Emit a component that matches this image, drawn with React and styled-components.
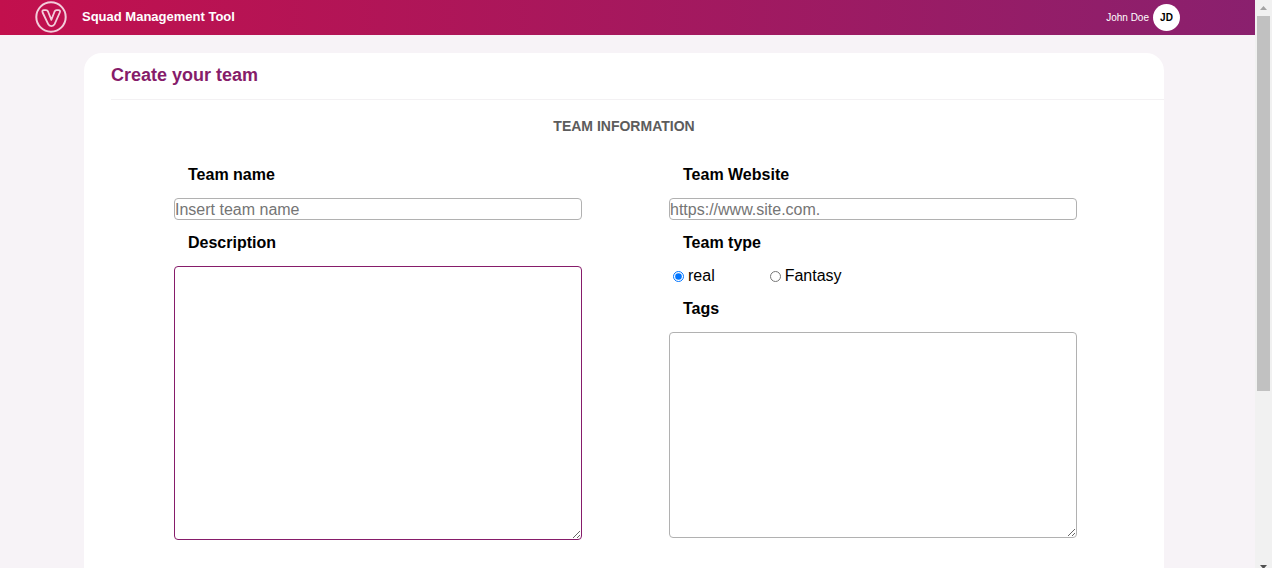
import React from "react";
import styled, { createGlobalStyle } from "styled-components";

const GlobalStyle = createGlobalStyle`
  *, *::before, *::after { box-sizing: border-box; }
  body {
    margin: 0;
    background: #f7f3f7;
    color: #000;
    font-family: "Liberation Sans", Arial, sans-serif;
    font-size: 16px;
    line-height: 20px;
  }
`;

const Shell = styled.div`
  display: flex;
  height: 100vh;
  overflow: hidden;
`;

const Page = styled.div`
  flex: 1;
  min-width: 0;
  display: flex;
  flex-direction: column;
`;

const Header = styled.header`
  flex: none;
  display: flex;
  align-items: center;
  justify-content: space-between;
  height: 35px;
  padding: 0 75px 0 35px;
  background: linear-gradient(to right, #c2104d, #8a206e);
  color: #fff;
`;

const Brand = styled.div`
  display: flex;
  align-items: center;
  gap: 15px;
  padding-bottom: 2px;
  font-size: 13px;
  font-weight: 700;
`;

const Logo = styled.svg`
  display: block;
  width: 32px;
  height: 32px;
`;

const User = styled.div`
  display: flex;
  align-items: center;
  gap: 4px;
  font-size: 10px;
`;

const Avatar = styled.span`
  display: grid;
  place-items: center;
  width: 27px;
  height: 27px;
  border-radius: 50%;
  background: #fff;
  color: #000;
  font-weight: 700;
`;

const Content = styled.main`
  flex: 1;
  display: flex;
  padding: 18px 91px 0 84px;
`;

const Card = styled.section`
  flex: 1;
  min-width: 0;
  border-radius: 18px 18px 0 0;
  background: #fff;
`;

const CardTitle = styled.h1`
  margin: 0 0 0 27px;
  padding: 12px 0 14px;
  border-bottom: 1px solid #f3f1f3;
  color: #861c6a;
  font-size: 18px;
`;

const SectionTitle = styled.h2`
  margin: 16px 0 29px;
  color: #5c5c5c;
  font-size: 14px;
  text-align: center;
`;

const Form = styled.form`
  display: grid;
  grid-template-columns: 1fr 1fr;
  align-items: start;
  gap: 87px;
  padding: 0 87px 0 90px;
`;

const Column = styled.div`
  display: flex;
  flex-direction: column;
  gap: 13px;
`;

const Field = styled.div`
  display: flex;
  flex-direction: column;
  gap: 13px;
`;

const Label = styled.label`
  padding-left: 14px;
  font-weight: 700;
`;

const TextInput = styled.input`
  width: 100%;
  height: 22px;
  padding: 1px 0 0;
  border: 1px solid #b1b1b1;
  border-radius: 4px;
  background: #fff;
  font: inherit;
  outline: none;
  &::placeholder { color: #757575; }
  &:focus { border-color: #861c6a; }
`;

const TextArea = styled.textarea`
  display: block;
  width: 100%;
  height: ${(p) => p.$height}px;
  padding: 2px;
  border: 1px solid ${(p) => (p.$active ? "#861c6a" : "#b1b1b1")};
  border-radius: 4px;
  background: #fff;
  font: inherit;
  outline: none;
  resize: both;
  &:focus { border-color: #861c6a; }
`;

const RadioField = styled.fieldset`
  margin: 0;
  padding: 0;
  border: 0;
  min-width: 0;
`;

const Legend = styled.legend`
  margin-bottom: 13px;
  padding: 0 0 0 14px;
  font-weight: 700;
`;

const RadioRow = styled.div`
  display: flex;
  gap: 55px;
  padding-left: 4px;
`;

const RadioLabel = styled.label`
  display: flex;
  align-items: center;
  gap: 4px;
`;

const Radio = styled.input`
  width: 11px;
  height: 11px;
  margin: 0;
`;

const ScrollTrack = styled.div`
  flex: none;
  display: flex;
  flex-direction: column;
  align-items: center;
  width: 17px;
  background: #f1f1f1;
`;

const ScrollThumb = styled.div`
  width: 13px;
  height: 66%;
  background: #c1c1c1;
`;

const ScrollArrow = styled.svg`
  flex: none;
  display: block;
  width: 17px;
  height: 16px;
  fill: ${(p) => (p.$end ? "#505050" : "#a3a3a3")};
  margin-top: ${(p) => (p.$end ? "auto" : 0)};
`;

export default function App() {
  return (
    <>
      <GlobalStyle />
      <Shell>
        <Page>
          <Header>
            <Brand>
              <Logo viewBox="0 0 32 32" fill="none" stroke="#f3cddb" aria-hidden="true">
                <circle cx="16" cy="16" r="14.7" strokeWidth="2" />
                <path
                  d="M9 9.2H11Q12.4 9.2 13 10.5L16.4 18.8L19.6 10.5Q20.2 9.2 21.6 9.2H23.4Q25.7 9.2 24.8 11.5L19.6 23.2Q18.7 25.1 16.4 25.1Q14.1 25.1 13.2 23.2L7.6 11.5Q6.7 9.2 9 9.2Z"
                  strokeWidth="1.8"
                  strokeLinejoin="round"
                />
              </Logo>
              <span>Squad Management Tool</span>
            </Brand>
            <User>
              <span>John Doe</span>
              <Avatar>JD</Avatar>
            </User>
          </Header>
          <Content>
            <Card>
              <CardTitle>Create your team</CardTitle>
              <SectionTitle>TEAM INFORMATION</SectionTitle>
              <Form>
                <Column>
                  <Field>
                    <Label htmlFor="name">Team name</Label>
                    <TextInput id="name" placeholder="Insert team name" />
                  </Field>
                  <Field>
                    <Label htmlFor="description">Description</Label>
                    <TextArea id="description" $height={274} $active />
                  </Field>
                </Column>
                <Column>
                  <Field>
                    <Label htmlFor="website">Team Website</Label>
                    <TextInput id="website" placeholder="https://www.site.com." />
                  </Field>
                  <RadioField>
                    <Legend>Team type</Legend>
                    <RadioRow>
                      <RadioLabel>
                        <Radio type="radio" name="type" value="real" defaultChecked />
                        real
                      </RadioLabel>
                      <RadioLabel>
                        <Radio type="radio" name="type" value="fantasy" />
                        Fantasy
                      </RadioLabel>
                    </RadioRow>
                  </RadioField>
                  <Field>
                    <Label htmlFor="tags">Tags</Label>
                    <TextArea id="tags" $height={206} />
                  </Field>
                </Column>
              </Form>
            </Card>
          </Content>
        </Page>
        <ScrollTrack aria-hidden="true">
          <ScrollArrow viewBox="0 0 17 16">
            <path d="M5 10L8.5 6L12 10Z" />
          </ScrollArrow>
          <ScrollThumb />
          <ScrollArrow $end viewBox="0 0 17 16">
            <path d="M5 13H12L8.5 17Z" />
          </ScrollArrow>
        </ScrollTrack>
      </Shell>
    </>
  );
}
